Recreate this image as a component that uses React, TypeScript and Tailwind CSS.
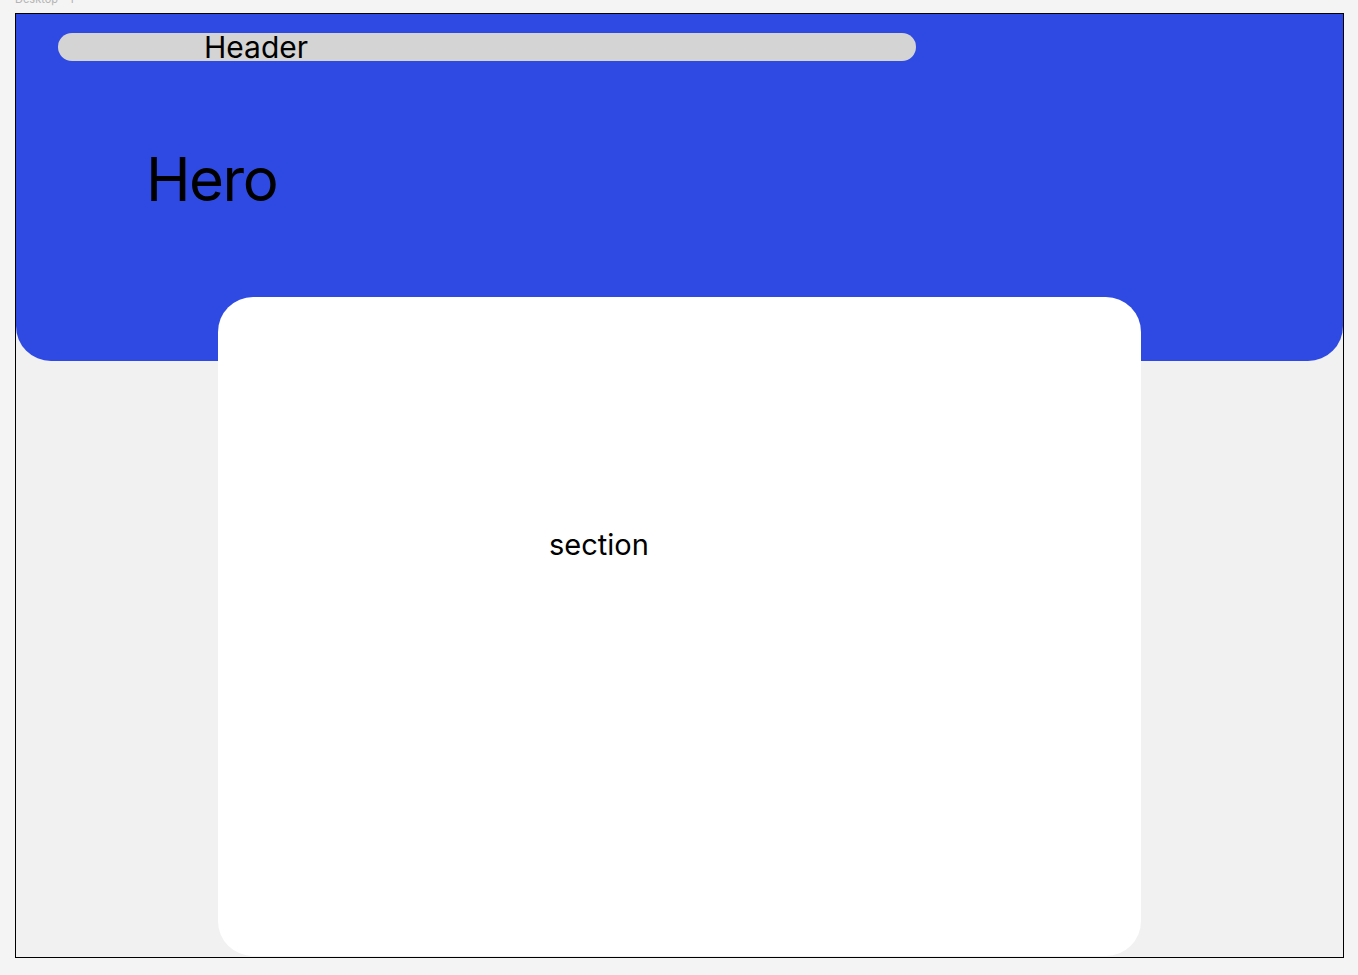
// Figma-style desktop frame: blue hero with header pill, overlapping white section card.
export default function App() {
  return (
    <div
      className="relative h-[975px] w-[1358px] overflow-hidden bg-[#f4f4f4] pt-[13px] pl-[15px]"
      style={{ fontFamily: "Inter, 'Noto Sans', sans-serif" }}
    >
      <div className="absolute top-[-6px] left-[15px] text-[11px] leading-none text-[#b3b3b3]">
        Desktop - 1
      </div>
      <div className="h-[945px] w-[1329px] overflow-hidden border border-black bg-[#f1f1f1]">
        <div className="h-[347px] rounded-b-[35px] bg-[#2f49e3] pt-[19px]">
          <div className="ml-[42px] flex h-[28px] w-[858px] items-center rounded-full bg-[#d4d4d4] pl-[146px]">
            <span className="mt-[-1px] text-[30px] leading-none text-black">Header</span>
          </div>
          <div className="mt-[88px] pl-[130px] text-[60px] leading-none tracking-[-1.5px] text-black">Hero</div>
        </div>
        <div className="relative mt-[-64px] ml-[202px] h-[659px] w-[923px] rounded-[35px] bg-white pt-[233px] pl-[331px]">
          <span className="text-[29px] leading-none text-black">section</span>
        </div>
      </div>
    </div>
  );
}
